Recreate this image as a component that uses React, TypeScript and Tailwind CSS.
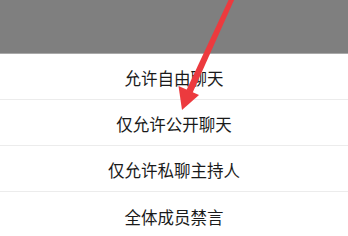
const options = ["允许自由聊天", "仅允许公开聊天", "仅允许私聊主持人", "全体成员禁言"];

export default function App() {
  return (
    <div
      className="relative h-[236px] w-[348px] overflow-hidden bg-white"
      style={{ fontFamily: '"Noto Sans CJK SC", "Noto Sans", sans-serif' }}
    >
      {/* dimmed backdrop */}
      <div className="h-[54px] border-b border-[#a9a9a9] bg-[#7f7f7f]" />

      {/* action sheet */}
      <div className="flex flex-col">
        {options.map((label, i) => (
          <div
            key={label}
            className={`flex h-[46px] items-center justify-center pt-[4px] text-[16.5px] text-[#1a1a1a] ${
              i < options.length - 1 ? "border-b border-[#ececec]" : ""
            }`}
          >
            {label}
          </div>
        ))}
      </div>

      {/* red annotation arrow */}
      <svg className="pointer-events-none absolute left-0 top-0" width="348" height="236" viewBox="0 0 348 236">
        <path d="M229.5 -2 L234.5 -1 L192.5 93 L186.5 90 Z" fill="#ec3a3e" />
        <path d="M182 110 L178.5 86 L199 95 Z" fill="#ec3a3e" />
      </svg>
    </div>
  );
}
